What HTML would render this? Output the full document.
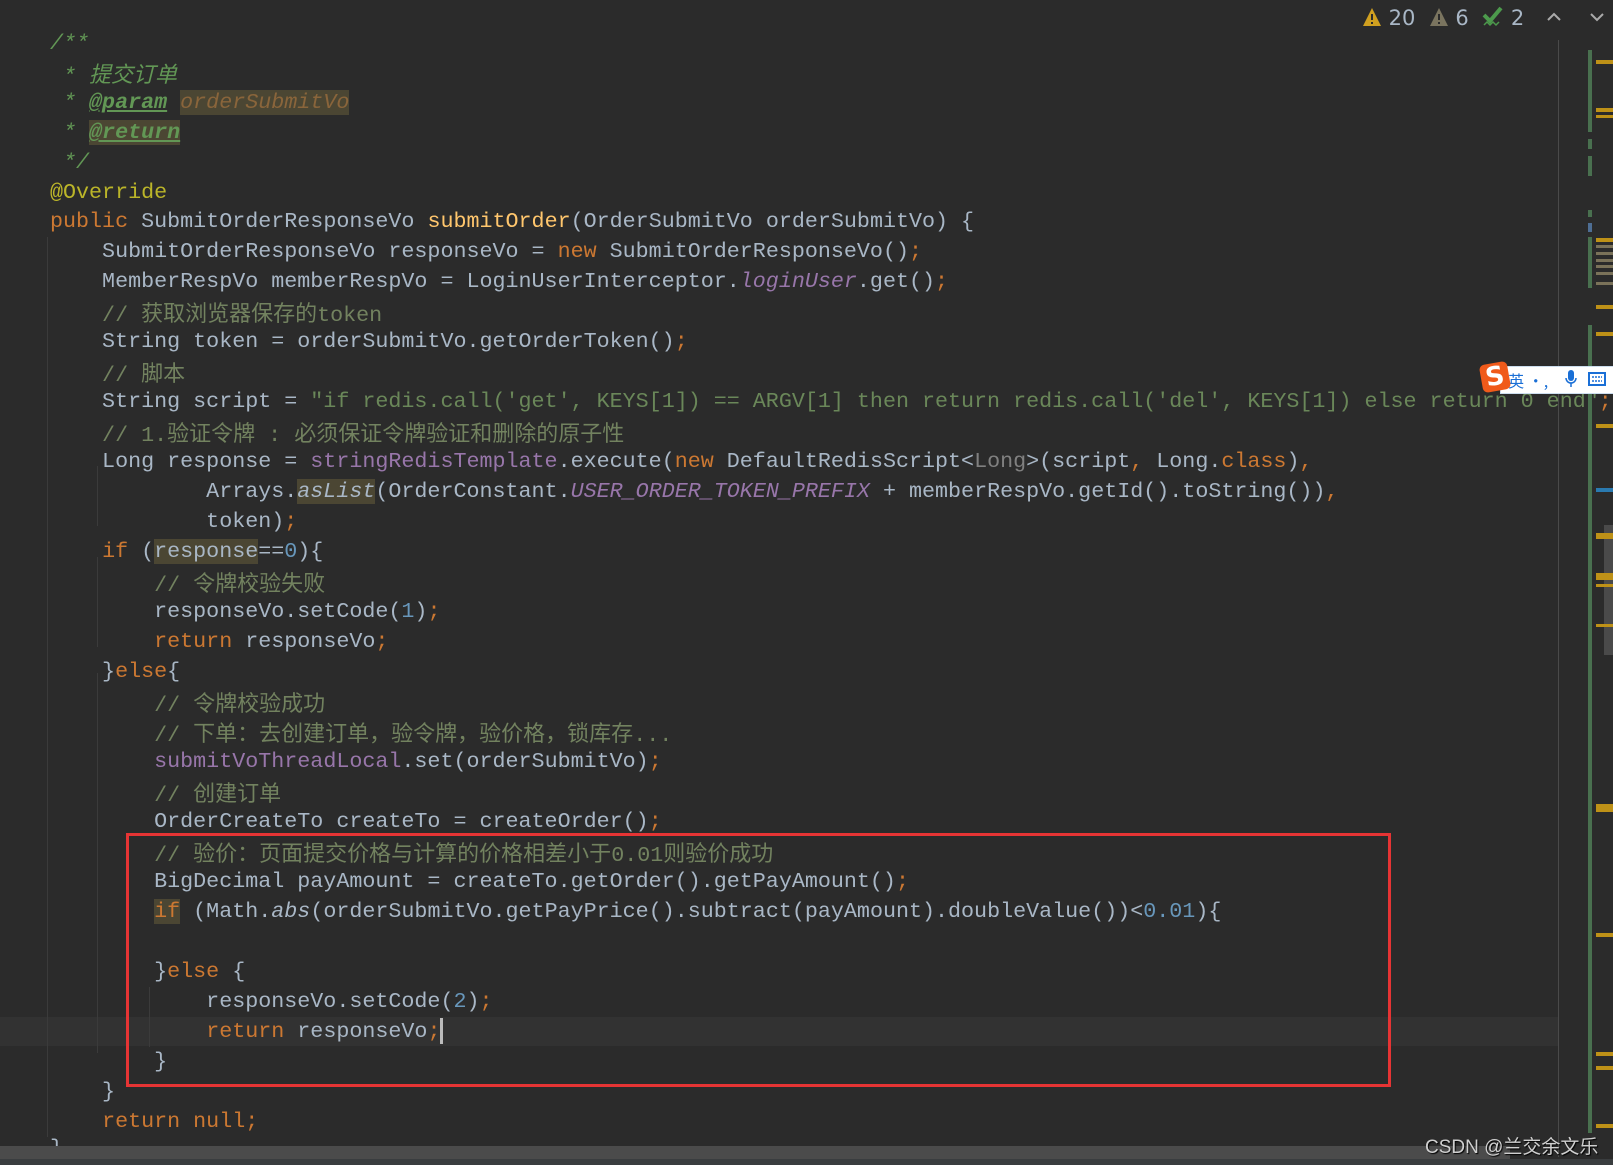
<!DOCTYPE html>
<html><head><meta charset="utf-8">
<style>
body{margin:0;width:1613px;height:1165px;background:#2b2b2b;overflow:hidden;position:relative;font-family:"Liberation Mono","DejaVu Sans Mono","Noto Sans CJK SC",monospace;}
.l{position:absolute;left:50px;height:30px;line-height:30px;font-size:21.7px;color:#a9b7c6;white-space:pre;}
.k{color:#cc7832}.s{color:#6a8759}.n{color:#6897bb}.c{color:#72825f}.d{color:#629755;font-style:italic}
.f{color:#9876aa;font-style:italic}.p{color:#9876aa}.m{color:#ffc66d}.a{color:#bbb529}.g{color:#808080}
.i{font-style:italic}
.z{font-family:"Noto Sans CJK SC",sans-serif;font-size:22px}
.hl{background:#4b4633}
.tag{text-decoration:underline;font-weight:bold;color:#629755;font-style:italic}
.abs{position:absolute}
</style></head><body>
<div class="abs" style="left:0;top:1017px;width:1558px;height:29px;background:#323232"></div>
<div class="abs" style="left:47px;top:237px;width:1px;height:900px;background:#3b3b3b"></div>
<div class="abs" style="left:97px;top:466px;width:1px;height:60px;background:#3b3b3b"></div>
<div class="abs" style="left:97px;top:557px;width:1px;height:90px;background:#3b3b3b"></div>
<div class="abs" style="left:97px;top:673px;width:1px;height:380px;background:#3b3b3b"></div>
<div class="abs" style="left:149px;top:987px;width:1px;height:60px;background:#3b3b3b"></div>

<div class="l d" style="top:29px">/**</div>
<div class="l d" style="top:58px"> * <span class="z">提交订单</span></div>
<div class="l d" style="top:88px"> * <span class="tag">@param</span> <span class="hl" style="color:#8a653b">orderSubmitVo</span></div>
<div class="l d" style="top:118px"> * <span class="tag hl">@return</span></div>
<div class="l d" style="top:148px"> */</div>
<div class="l a" style="top:178px">@Override</div>
<div class="l" style="top:207px"><span class="k">public</span> SubmitOrderResponseVo <span class="m">submitOrder</span>(OrderSubmitVo orderSubmitVo) {</div>
<div class="l" style="top:237px">    SubmitOrderResponseVo responseVo = <span class="k">new</span> SubmitOrderResponseVo()<span class="k">;</span></div>
<div class="l" style="top:267px">    MemberRespVo memberRespVo = LoginUserInterceptor.<span class="f">loginUser</span>.get()<span class="k">;</span></div>
<div class="l c" style="top:297px">    // <span class="z">获取浏览器保存的</span>token</div>
<div class="l" style="top:327px">    String token = orderSubmitVo.getOrderToken()<span class="k">;</span></div>
<div class="l c" style="top:357px">    // <span class="z">脚本</span></div>
<div class="l" style="top:387px">    String script = <span class="s">"if redis.call('get', KEYS[1]) == ARGV[1] then return redis.call('del', KEYS[1]) else return 0 end"</span><span class="k">;</span></div>
<div class="l c" style="top:417px">    // 1.<span class="z">验证令牌</span> : <span class="z">必须保证令牌验证和删除的原子性</span></div>
<div class="l" style="top:447px">    Long response = <span class="p">stringRedisTemplate</span>.execute(<span class="k">new</span> DefaultRedisScript&lt;<span class="g">Long</span>&gt;(script<span class="k">,</span> Long.<span class="k">class</span>)<span class="k">,</span></div>
<div class="l" style="top:477px">            Arrays.<span class="i hl">asList</span>(OrderConstant.<span class="f">USER_ORDER_TOKEN_PREFIX</span> + memberRespVo.getId().toString())<span class="k">,</span></div>
<div class="l" style="top:507px">            token)<span class="k">;</span></div>
<div class="l" style="top:537px">    <span class="k">if</span> (<span class="hl">response</span>==<span class="n">0</span>){</div>
<div class="l c" style="top:567px">        // <span class="z">令牌校验失败</span></div>
<div class="l" style="top:597px">        responseVo.setCode(<span class="n">1</span>)<span class="k">;</span></div>
<div class="l" style="top:627px">        <span class="k">return</span> responseVo<span class="k">;</span></div>
<div class="l" style="top:657px">    }<span class="k">else</span>{</div>
<div class="l c" style="top:687px">        // <span class="z">令牌校验成功</span></div>
<div class="l c" style="top:717px">        // <span class="z">下单：去创建订单，验令牌，验价格，锁库存</span>...</div>
<div class="l" style="top:747px">        <span class="p">submitVoThreadLocal</span>.set(orderSubmitVo)<span class="k">;</span></div>
<div class="l c" style="top:777px">        // <span class="z">创建订单</span></div>
<div class="l" style="top:807px">        OrderCreateTo createTo = createOrder()<span class="k">;</span></div>
<div class="l c" style="top:837px">        // <span class="z">验价：页面提交价格与计算的价格相差小于</span>0.01<span class="z">则验价成功</span></div>
<div class="l" style="top:867px">        BigDecimal payAmount = createTo.getOrder().getPayAmount()<span class="k">;</span></div>
<div class="l" style="top:897px">        <span class="k hl">if</span> (Math.<span class="i">abs</span>(orderSubmitVo.getPayPrice().subtract(payAmount).doubleValue())&lt;<span class="n">0.01</span>){</div>
<div class="l" style="top:957px">        }<span class="k">else</span> {</div>
<div class="l" style="top:987px">            responseVo.setCode(<span class="n">2</span>)<span class="k">;</span></div>
<div class="l" style="top:1017px">            <span class="k">return</span> responseVo<span class="k">;</span><span style="display:inline-block;width:3px;height:26px;background:#bbb;vertical-align:middle"></span></div>
<div class="l" style="top:1047px">        }</div>
<div class="l" style="top:1077px">    }</div>
<div class="l" style="top:1107px">    <span class="k">return null;</span></div>
<div class="l" style="top:1134px">}</div>

<div class="abs" style="left:126px;top:833px;width:1259px;height:248px;border:3px solid #e63434"></div>

<!-- top-right inspection -->
<div class="abs" style="left:1362px;top:4px;font-family:'DejaVu Sans',sans-serif;font-size:21px;color:#a9b7c6;line-height:28px;white-space:pre"><svg width="20" height="20" viewBox="0 0 20 20" style="vertical-align:-2px"><path d="M10 1L19 19H1Z" fill="#d0a020"/><rect x="9" y="7" width="2" height="6" fill="#2b2b2b"/><rect x="9" y="15" width="2" height="2" fill="#2b2b2b"/></svg> 20  <svg width="20" height="20" viewBox="0 0 20 20" style="vertical-align:-2px"><path d="M10 1L19 19H1Z" fill="#7a745f"/><rect x="9" y="7" width="2" height="6" fill="#2b2b2b"/><rect x="9" y="15" width="2" height="2" fill="#2b2b2b"/></svg> 6  <svg width="22" height="22" viewBox="0 0 22 22" style="vertical-align:-3px"><path d="M2 9L8 15L19 2" stroke="#4c9a4c" stroke-width="4" fill="none"/><path d="M2 19l3-3 3 3 3-3 3 3 3-3" stroke="#4c9a4c" stroke-width="1.5" fill="none"/></svg> 2</div>
<svg class="abs" style="left:1545px;top:10px" width="18" height="14" viewBox="0 0 18 14"><path d="M3 10L9 4L15 10" stroke="#aaa" stroke-width="2" fill="none"/></svg>
<svg class="abs" style="left:1588px;top:10px" width="18" height="14" viewBox="0 0 18 14"><path d="M3 4L9 10L15 4" stroke="#aaa" stroke-width="2" fill="none"/></svg>

<!-- right gutter -->
<div class="abs" style="left:1558px;top:40px;width:1px;height:1117px;background:#4a4a4a"></div>
<div class="abs" style="left:1588px;top:50px;width:4px;height:82px;background:#49704f"></div>
<div class="abs" style="left:1588px;top:139px;width:4px;height:10px;background:#49704f"></div>
<div class="abs" style="left:1588px;top:156px;width:4px;height:20px;background:#49704f"></div>
<div class="abs" style="left:1588px;top:210px;width:4px;height:7px;background:#49704f"></div>
<div class="abs" style="left:1588px;top:223px;width:4px;height:9px;background:#4e6e94"></div>
<div class="abs" style="left:1588px;top:237px;width:4px;height:51px;background:#49704f"></div>
<div class="abs" style="left:1588px;top:325px;width:4px;height:808px;background:#49704f"></div>
<div class="abs" style="left:1604px;top:525px;width:9px;height:130px;background:#4a4a4a"></div>
<div class="abs" style="left:1596px;top:60px;width:17px;height:4px;background:#be9117"></div>
<div class="abs" style="left:1596px;top:108px;width:17px;height:4px;background:#be9117"></div>
<div class="abs" style="left:1596px;top:115px;width:17px;height:3px;background:#be9117"></div>
<div class="abs" style="left:1596px;top:238px;width:17px;height:4px;background:#be9117"></div>
<div class="abs" style="left:1596px;top:245px;width:17px;height:3px;background:#7a7259"></div>
<div class="abs" style="left:1596px;top:252px;width:17px;height:3px;background:#7a7259"></div>
<div class="abs" style="left:1596px;top:259px;width:17px;height:3px;background:#7a7259"></div>
<div class="abs" style="left:1596px;top:265px;width:17px;height:3px;background:#7a7259"></div>
<div class="abs" style="left:1596px;top:272px;width:17px;height:3px;background:#7a7259"></div>
<div class="abs" style="left:1596px;top:282px;width:17px;height:3px;background:#7a7259"></div>
<div class="abs" style="left:1596px;top:305px;width:17px;height:4px;background:#be9117"></div>
<div class="abs" style="left:1596px;top:332px;width:17px;height:4px;background:#be9117"></div>
<div class="abs" style="left:1596px;top:424px;width:17px;height:4px;background:#be9117"></div>
<div class="abs" style="left:1596px;top:488px;width:17px;height:4px;background:#2a7ab0"></div>
<div class="abs" style="left:1596px;top:533px;width:17px;height:6px;background:#be9117"></div>
<div class="abs" style="left:1596px;top:573px;width:17px;height:7px;background:#be9117"></div>
<div class="abs" style="left:1596px;top:584px;width:17px;height:3px;background:#be9117"></div>
<div class="abs" style="left:1596px;top:624px;width:17px;height:3px;background:#be9117"></div>
<div class="abs" style="left:1596px;top:804px;width:17px;height:8px;background:#be9117"></div>
<div class="abs" style="left:1596px;top:933px;width:17px;height:4px;background:#be9117"></div>
<div class="abs" style="left:1596px;top:1052px;width:17px;height:4px;background:#be9117"></div>
<div class="abs" style="left:1596px;top:1066px;width:17px;height:4px;background:#be9117"></div>
<div class="abs" style="left:1596px;top:1124px;width:17px;height:4px;background:#be9117"></div>

<!-- IME widget -->
<div class="abs" style="left:1500px;top:366px;width:113px;height:26px;background:#fff;border:1px solid #cde;font-family:'Noto Sans CJK SC',sans-serif;font-size:16px;color:#1a6fd6;line-height:26px;white-space:pre">  英 •,</div>
<div class="abs" style="left:1481px;top:363px;width:28px;height:28px;background:#f05a1a;border-radius:5px;transform:rotate(-10deg);color:#fff;font:bold 26px 'DejaVu Sans',sans-serif;text-align:center;line-height:28px">S</div>
<svg class="abs" style="left:1565px;top:370px" width="12" height="18" viewBox="0 0 12 18"><rect x="3" y="0" width="6" height="11" rx="3" fill="#1a6fd6"/><path d="M1 8a5 5 0 0 0 10 0M6 13v4" stroke="#1a6fd6" stroke-width="1.5" fill="none"/></svg>
<svg class="abs" style="left:1588px;top:372px" width="18" height="14" viewBox="0 0 18 14"><rect x="1" y="1" width="16" height="12" fill="none" stroke="#1a6fd6" stroke-width="2"/><path d="M4 5h10M4 9h10" stroke="#1a6fd6" stroke-width="1.5" stroke-dasharray="2 1"/></svg>

<!-- bottom scrollbar -->
<div class="abs" style="left:0;top:1146px;width:1510px;height:13px;background:#4b4b4b"></div>
<div class="abs" style="left:0;top:1159px;width:1613px;height:6px;background:#3a3d3f"></div>
<div class="abs" style="left:1425px;top:1132px;font-family:'Liberation Sans','Noto Sans CJK SC',sans-serif;font-size:19px;color:#cfcfcf;text-shadow:1px 1px 1px #000">CSDN @兰交余文乐</div>
</body></html>
